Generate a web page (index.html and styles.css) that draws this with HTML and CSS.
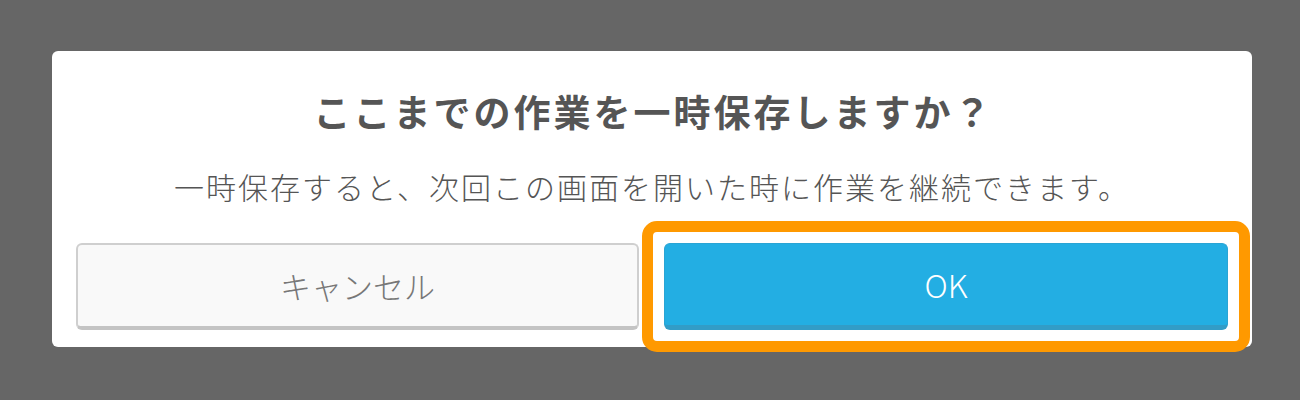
FILE: index.html
```html
<!DOCTYPE html>
<html lang="ja">
<head>
<meta charset="utf-8">
<title>一時保存</title>
<link rel="stylesheet" href="styles.css">
</head>
<body>
<div class="dialog">
  <h1 class="title">ここまでの作業を一時保存しますか？</h1>
  <p class="message">一時保存すると、次回この画面を開いた時に作業を継続できます。</p>
  <div class="actions">
    <button class="btn btn-cancel" type="button">キャンセル</button>
    <div class="ok-wrap">
      <button class="btn btn-ok" type="button">OK</button>
      <span class="highlight"></span>
    </div>
  </div>
</div>
</body>
</html>
```

FILE: styles.css
```css
html, body {
  margin: 0;
  padding: 0;
}

body {
  background: #666666;
  font-family: "Noto Sans CJK JP", "Noto Sans", sans-serif;
  padding: 51px 48px 0 52px;
  height: 400px;
  box-sizing: border-box;
  overflow: hidden;
}

.dialog {
  width: 1200px;
  box-sizing: border-box;
  background: #ffffff;
  border-radius: 6px;
  padding: 36px 24px 17px 24px;
}

.title {
  margin: 0;
  font-size: 37px;
  line-height: 48px;
  font-weight: 700;
  color: #555555;
  text-align: center;
  letter-spacing: 3px;
  padding-left: 3px;
}

.message {
  margin: 31px 0 0 0;
  font-size: 30px;
  line-height: 40px;
  font-weight: 300;
  color: #555555;
  text-align: center;
  letter-spacing: 2px;
}

.actions {
  margin-top: 37px;
  display: grid;
  grid-template-columns: 563px 564px;
  column-gap: 25px;
}

.btn {
  display: block;
  width: 100%;
  height: 87px;
  box-sizing: border-box;
  margin: 0;
  padding: 0;
  border-radius: 6px;
  font-family: "Noto Sans CJK JP", "Noto Sans", sans-serif;
  font-size: 30px;
  cursor: pointer;
}

.btn-cancel {
  background: #f9f9f9;
  border: 2px solid #cfcfcf;
  border-bottom: 4px solid #c4c4c4;
  color: #777777;
  font-size: 31px;
  font-weight: 300;
  line-height: 81px;
}

.ok-wrap {
  position: relative;
}

.btn-ok {
  background: #23aee3;
  border: 1px solid #2aa4d4;
  border-bottom: 5px solid #329cc7;
  color: #ffffff;
  font-size: 32px;
  font-weight: 300;
  line-height: 81px;
}

.highlight {
  position: absolute;
  left: -22px;
  right: -22px;
  top: -22px;
  bottom: -22px;
  border: 11px solid #ff9900;
  border-radius: 15px;
  pointer-events: none;
}
```
